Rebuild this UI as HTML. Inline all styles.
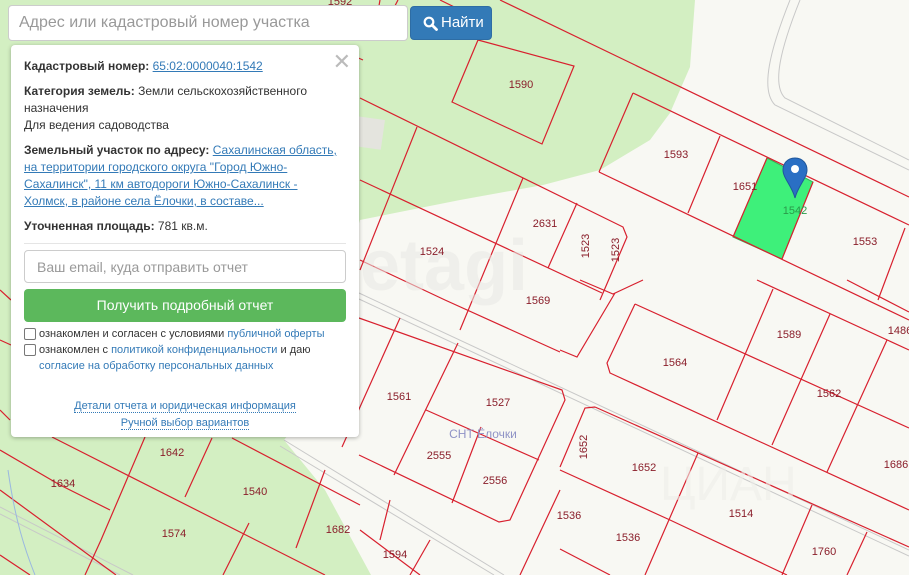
<!DOCTYPE html>
<html><head><meta charset="utf-8"><style>
*{box-sizing:border-box;margin:0;padding:0}
body{width:909px;height:575px;overflow:hidden;position:relative;font-family:"Liberation Sans",Arial,"Noto Sans CJK SC",sans-serif;background:#f8f8f3}
svg.map{position:absolute;left:0;top:0}
.search{position:absolute;left:8px;top:5px;width:400px;height:36px;background:#fff;border:1px solid #ccc;border-radius:4px;font-size:16px;color:#999;padding:8px 10px}
.btn{position:absolute;left:410px;top:6px;width:82px;height:34px;background:#337ab7;border:1px solid #2e6da4;border-radius:4px;color:#fff;font-size:15px;padding:7px 0 0 30px}
.btn svg{position:absolute;left:12px;top:9px}
.panel{position:absolute;left:11px;top:45px;width:348px;height:392px;background:#fff;border-radius:4px;box-shadow:0 1px 4px rgba(0,0,0,.3);font-size:12px;color:#333;padding:13px 13px}
.panel p{line-height:17px;margin-bottom:8px}
.panel p.addr{padding-right:7px}
.panel a{color:#337ab7;text-decoration:underline}
.close{position:absolute;right:8px;top:4px;font-size:22px;color:#bbb;font-weight:300}
hr{border:0;border-top:1px solid #e5e5e5;margin:8px 0 6px}
.email{height:33px;border:1px solid #ccc;border-radius:4px;color:#999;font-size:14px;padding:8px 12px}
.green{margin-top:6px;height:33px;background:#5cb85c;border-radius:4px;color:#fff;font-size:14px;text-align:center;line-height:33px}
.cb{font-size:11px;line-height:16px;color:#333;position:relative;padding-left:15px;margin-top:4px}
.cb .box{position:absolute;left:0;top:2px;width:12px;height:12px;border:1px solid #777;border-radius:2px}
.cb span{color:#337ab7}
.links{text-align:center;font-size:11px;line-height:17px;margin-top:24px}
.links a{text-decoration:none!important;border-bottom:1px dotted #337ab7}
</style></head><body>
<svg class="map" width="909" height="575" viewBox="0 0 909 575">
<rect width="909" height="575" fill="#f8f8f3"/>
<path d="M0 0 L695 0 L690 67 L670 113 L650 140 L600 170 L543 185 L460 200 L360 220 L330 320 L300 420 L284 440 L325 490 L371 575 L0 575 Z" fill="#d3efc2"/>
<g stroke="#c8c8c8" stroke-width="1" fill="none">
<path d="M359 293 L909 550 M359 299 L909 556"/>
<path d="M284 440 L504 575 M280 446 L494 575"/>
<path d="M0 507 L133 575 M0 514 L120 575"/>
<path d="M790 0 C770 50 760 90 775 105 L909 170 M800 0 C780 50 772 85 785 98 L909 160"/>
</g>
<polygon points="767,158 813,182 782,259 733,237" fill="#3ef07a" stroke="#39b158"/>
<g stroke="#d8202e" stroke-width="1.2" fill="none">
<path d="M500 0 L909 197"/>
<path d="M633 93 L909 225 M599 172 L909 320 M633 93 L599 172"/>
<path d="M720 136 L688 213 M767 158 L733 237 M813 182 L782 259 M905 228 L878 300"/>
<path d="M478 40 L574 66 L542 144 L452 102 Z M440 0 L485 22 L478 40"/>
<path d="M360 98 L623 227 L627 237 L600 300"/>
<path d="M360 180 L602 293"/>
<path d="M417 127 L360 270 M523 178 L460 330 M577 203 L548 268"/>
<path d="M360 260 L445 300 L560 352"/>
<path d="M380 0 L373 40 M340 50 L363 60 M398 0 L385 25"/>
<path d="M580 280 L613 294 L643 280 M615 293 L577 357 L560 350"/>
<path d="M635 304 L909 428 M635 304 L607 363 L610 373 L909 510"/>
<path d="M757 280 L909 350 M847 280 L909 312"/>
<path d="M595 407 L909 547 M595 407 L585 408 L560 467"/>
<path d="M560 470 L670 520 L787 575"/>
<path d="M773 289 L717 420 M830 314 L772 445 M887 340 L827 472"/>
<path d="M698 453 L645 575 M812 505 L782 575 M867 532 L847 575"/>
<path d="M560 549 L610 575"/>
<path d="M359 318 L562 390 L565 400 L510 520 L499 522 L359 455"/>
<path d="M400 318 L342 447 M458 343 L394 475 M426 410 L539 460 M481 427 L452 503"/>
<path d="M390 500 L380 540 M360 530 L420 575 M430 540 L410 575 M560 490 L520 575"/>
<path d="M52 437 L325 575 M0 490 L116 575 M232 438 L360 505"/>
<path d="M145 437 L101 540 L85 575 M212 438 L185 497 M249 523 L223 575 M325 470 L296 548 M0 410 L10 420"/>
<path d="M0 450 L60 485 L110 510 M0 555 L30 575"/>
<path d="M0 290 L11 300 M0 340 L11 345"/>
</g>
<path d="M8 470 C15 520 25 550 35 575" stroke="#9ab8e0" fill="none"/>
<text x="360" y="290" font-size="72" font-weight="bold" fill="#e8e8e4" fill-opacity="0.55" font-family="Liberation Sans,sans-serif">etagi</text>
<text x="660" y="500" font-size="48" fill="#eeeeea" fill-opacity="0.6" font-family="Liberation Sans,sans-serif">ЦИАН</text>
<g font-size="11" fill="#8a1e2a" text-anchor="middle" font-family="Liberation Sans,sans-serif">
<text x="340" y="5">1592</text><text x="521" y="88">1590</text><text x="676" y="158">1593</text><text x="745" y="190">1651</text>
<text x="795" y="214" fill="#2a9a4a">1542</text><text x="865" y="245">1553</text><text x="545" y="227">2631</text>
<text x="432" y="255">1524</text><text x="538" y="304">1569</text><text x="789" y="338">1589</text><text x="675" y="366">1564</text>
<text x="399" y="400">1561</text><text x="498" y="406">1527</text><text x="829" y="397">1562</text><text x="900" y="334">1486</text>
<text x="439" y="459">2555</text><text x="495" y="484">2556</text><text x="896" y="468">1686</text><text x="644" y="471">1652</text>
<text x="172" y="456">1642</text><text x="63" y="487">1634</text><text x="255" y="495">1540</text><text x="569" y="519">1536</text>
<text x="741" y="517">1514</text><text x="628" y="541">1536</text><text x="174" y="537">1574</text><text x="338" y="533">1682</text>
<text x="395" y="558">1594</text><text x="824" y="555">1760</text>
<text transform="translate(589,246) rotate(-90)">1523</text><text transform="translate(619,250) rotate(-90)">1523</text>
<text transform="translate(587,447) rotate(-90)">1652</text>
</g>
<text x="483" y="438" font-size="12" fill="#8f93c6" text-anchor="middle" font-family="Liberation Sans,sans-serif">СНТ Ёлочки</text>
<rect x="355" y="118" width="28" height="30" fill="#e4e4de" transform="rotate(8 369 133)"/>
<g transform="translate(795,170)">
<path d="M0 -12 C-8 -12 -12 -6 -12 0 C-12 8 -3 16 0 28 C3 16 12 8 12 0 C12 -6 8 -12 0 -12 Z" fill="#2a6fc4" stroke="#1f579b"/>
<circle cx="0" cy="-1" r="4" fill="#fff"/>
</g>
</svg>
<div class="search">Адрес или кадастровый номер участка</div>
<div class="btn"><svg width="15" height="15" viewBox="0 0 15 15"><circle cx="6" cy="6" r="4.3" fill="none" stroke="#fff" stroke-width="2.2"/><path d="M9 9 L13.5 13.5" stroke="#fff" stroke-width="2.8" stroke-linecap="round"/></svg>Найти</div>
<div class="panel">
<div class="close">✕</div>
<p><b>Кадастровый номер:</b> <a>65:02:0000040:1542</a></p>
<p><b>Категория земель:</b> Земли сельскохозяйственного назначения<br>Для ведения садоводства</p>
<p class="addr"><b>Земельный участок по адресу:</b> <a>Сахалинская область, на территории городского округа "Город Южно-Сахалинск", 11 км автодороги Южно-Сахалинск - Холмск, в районе села Ёлочки, в составе...</a></p>
<p><b>Уточненная площадь:</b> 781 кв.м.</p>
<hr>
<div class="email">Ваш email, куда отправить отчет</div>
<div class="green">Получить подробный отчет</div>
<div class="cb"><div class="box"></div>ознакомлен и согласен с условиями <span>публичной оферты</span></div>
<div class="cb" style="margin-top:0"><div class="box"></div>ознакомлен с <span>политикой конфиденциальности</span> и даю <span>согласие на обработку персональных данных</span></div>
<div class="links"><a>Детали отчета и юридическая информация</a><br><a>Ручной выбор вариантов</a></div>
</div>
</body></html>
